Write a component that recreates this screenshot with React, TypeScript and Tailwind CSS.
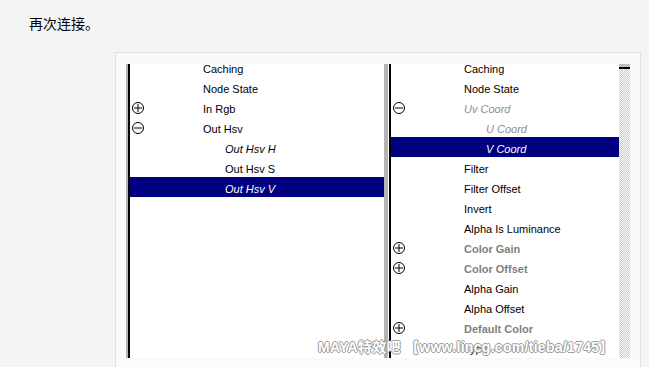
import React from 'react';

type Row = {
    label: string;
    icon?: 'plus' | 'minus';
    indent?: boolean;
    style?: 'normal' | 'italic' | 'dim' | 'bold';
    selected?: boolean;
};

const leftRows: Row[] = [
    { label: 'Caching' },
    { label: 'Node State' },
    { label: 'In Rgb', icon: 'plus' },
    { label: 'Out Hsv', icon: 'minus' },
    { label: 'Out Hsv H', indent: true, style: 'italic' },
    { label: 'Out Hsv S', indent: true },
    { label: 'Out Hsv V', indent: true, style: 'italic', selected: true },
];

const rightRows: Row[] = [
    { label: 'Caching' },
    { label: 'Node State' },
    { label: 'Uv Coord', icon: 'minus', style: 'dim' },
    { label: 'U Coord', indent: true, style: 'dim' },
    { label: 'V Coord', indent: true, style: 'italic', selected: true },
    { label: 'Filter' },
    { label: 'Filter Offset' },
    { label: 'Invert' },
    { label: 'Alpha Is Luminance' },
    { label: 'Color Gain', icon: 'plus', style: 'bold' },
    { label: 'Color Offset', icon: 'plus', style: 'bold' },
    { label: 'Alpha Gain' },
    { label: 'Alpha Offset' },
    { label: 'Default Color', icon: 'plus', style: 'bold' },
    { label: 'Type' },
];

// petit rond +/- façon arbre Maya
const TreeIcon = ({ kind }: { kind: 'plus' | 'minus' }) => (
    <svg width="12" height="12" viewBox="0 0 12 12" className="absolute left-[2px] top-[5px]">
        <circle cx="6" cy="6" r="5.5" fill="none" stroke="#000" strokeWidth="1" />
        <line x1="2" y1="6" x2="10" y2="6" stroke="#000" strokeWidth="1" />
        {kind === 'plus' && <line x1="6" y1="2" x2="6" y2="10" stroke="#000" strokeWidth="1" />}
    </svg>
);

const ListRow = ({ row }: { row: Row }) => {
    const textStyle =
        row.style === 'bold'
            ? 'font-bold text-[#808080]'
            : row.style === 'dim'
                ? 'italic text-[#8c8c8c]'
                : row.style === 'italic'
                    ? 'italic'
                    : '';
    return (
        <div className={`relative h-[20px] ${row.selected ? 'bg-[#000080] text-white' : 'text-black'}`}>
            {row.icon && <TreeIcon kind={row.icon} />}
            <span className={`absolute top-[4px] leading-[16px] whitespace-nowrap ${row.indent ? 'left-[95px]' : 'left-[73px]'} ${textStyle} ${row.selected ? 'text-white' : ''}`}>
                {row.label}
            </span>
        </div>
    );
};

export default function App() {
    return (
        <div className="relative w-[649px] h-[367px] overflow-hidden bg-[#f4f4f4] font-['Liberation_Sans',Arial,sans-serif]">
            {/* titre */}
            <div className="h-[52px] pl-[29px] pt-[13px]">
                <p className="text-[14px] leading-[20px] text-black font-['Noto_Sans_CJK_SC','Noto_Sans',sans-serif]">再次连接。</p>
            </div>

            {/* cadre de la capture */}
            <div className="ml-[115px] w-[526px] h-[330px] border border-[#e0e0e0] bg-[#fafafa] pl-[10px] pr-[10px] pt-[11px]">
                <div className="flex h-[294px] text-[11px]">
                    {/* panneau gauche */}
                    <div className="w-[2px] bg-[#b4b4b4]" />
                    <div className="w-[2px] bg-black" />
                    <div className="w-[254px] bg-white overflow-hidden">
                        <div className="mt-[-7px]">
                            {leftRows.map((r) => <ListRow key={r.label} row={r} />)}
                        </div>
                    </div>

                    {/* séparateur */}
                    <div className="w-[4px] bg-[#b4b4b4]" />
                    <div className="w-[1px] bg-white" />
                    <div className="w-[2px] bg-black" />

                    {/* panneau droit */}
                    <div className="w-[228px] bg-white overflow-hidden">
                        <div className="mt-[-7px]">
                            {rightRows.map((r) => <ListRow key={r.label} row={r} />)}
                        </div>
                    </div>

                    {/* barre de défilement */}
                    <div className="w-[11px] flex flex-col">
                        <div className="h-[3px] bg-[#c0c0c0]" />
                        <div className="h-[2px] bg-black" />
                        <div className="flex-1 bg-[repeating-conic-gradient(#c8c8c8_0_25%,#ffffff_0_50%)] bg-[length:2px_2px]" />
                    </div>
                </div>
            </div>

            {/* filigrane */}
            <div className="absolute left-[318px] top-[338px] text-[14px] font-bold leading-[18px] tracking-[0.3px] text-white whitespace-nowrap font-['Liberation_Sans','Noto_Sans_CJK_SC',sans-serif] [text-shadow:1px_0_0_#9a9a9a,-1px_0_0_#9a9a9a,0_1px_0_#9a9a9a,0_-1px_0_#9a9a9a]">
                MAYA特效吧 【www.lincg.com/tieba/1745】
            </div>
        </div>
    );
}
